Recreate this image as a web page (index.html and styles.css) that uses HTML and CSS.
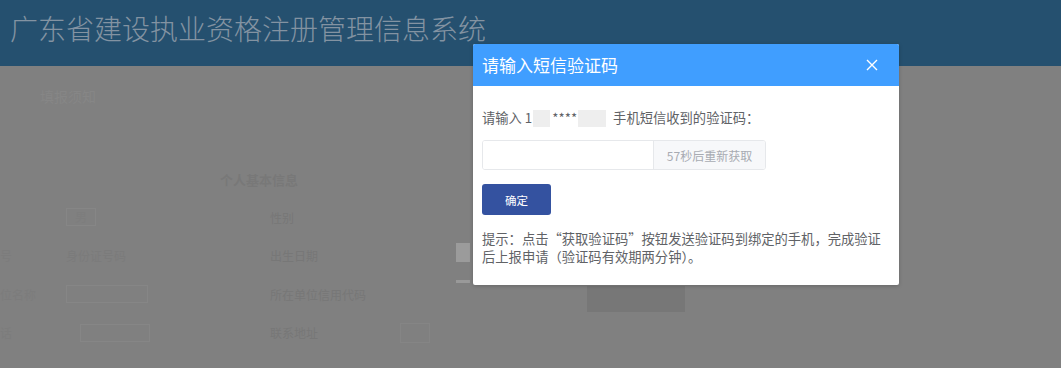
FILE: index.html
```html
<!DOCTYPE html>
<html lang="zh-CN">
<head>
<meta charset="utf-8">
<title>广东省建设执业资格注册管理信息系统</title>
<link rel="stylesheet" href="styles.css">
</head>
<body>
<div class="page">
  <header class="topbar">
    <h1 class="site-title">广东省建设执业资格注册管理信息系统</h1>
  </header>
  <main class="content">
    <div class="notice">填报须知</div>
    <div class="form">
      <div class="form-title">个人基本信息</div>
      <div class="row">
        <span class="cell c1"></span><span class="cell c2 box">男</span><span class="cell c3">性别</span><span class="cell c4"></span>
      </div>
      <div class="row">
        <span class="cell c1">号</span><span class="cell c2">身份证号码</span><span class="cell c3">出生日期</span><span class="cell c4"><span class="light-block"></span></span>
      </div>
      <div class="row">
        <span class="cell c1">位名称</span><span class="cell c2 box wide"></span><span class="cell c3">所在单位信用代码</span><span class="cell c4"><span class="light-line"></span><span class="dark-block"></span></span>
      </div>
      <div class="row">
        <span class="cell c1">话</span><span class="cell c2 box wide2"></span><span class="cell c3"><span>联系地址</span><span class="small-box"></span></span><span class="cell c4"></span>
      </div>
    </div>
  </main>
</div>

<div class="dialog">
  <div class="dialog-head">
    <span class="dialog-title">请输入短信验证码</span>
    <svg class="close" width="12" height="12" viewBox="0 0 12 12"><path d="M1 1 L11 11 M11 1 L1 11" stroke="#fff" stroke-width="1.4" fill="none"/></svg>
  </div>
  <div class="dialog-body">
    <p class="prompt">请输入 1<span class="mask m1"></span>****<span class="mask m2"></span>手机短信收到的验证码：</p>
    <div class="code-group">
      <input class="code-input" type="text">
      <span class="code-btn">57秒后重新获取</span>
    </div>
    <button class="ok-btn">确定</button>
    <p class="hint">提示：点击“获取验证码”按钮发送验证码到绑定的手机，完成验证后上报申请（验证码有效期两分钟）。</p>
  </div>
</div>
</body>
</html>
```
FILE: styles.css
```css
* { box-sizing: border-box; }
html, body {
  margin: 0;
  padding: 0;
  width: 1061px;
  height: 368px;
  overflow: hidden;
  background: #808080;
  font-family: "Noto Sans CJK SC", "Noto Sans", sans-serif;
}
.page { position: relative; }
.topbar {
  height: 66px;
  background: #25506f;
  padding: 8px 0 0 10px;
}
.site-title {
  margin: 0;
  font-weight: 300;
  font-size: 28px;
  line-height: 40px;
  color: #8393a2;
  letter-spacing: 0;
}
.content {
  padding: 20px 0 0 0;
}
.notice {
  margin-left: 40px;
  font-size: 14px;
  color: #868686;
  line-height: 20px;
}
.form { margin-top: 66px; }
.form-title {
  margin-left: 220px;
  font-size: 13px;
  font-weight: bold;
  color: #787878;
  line-height: 16px;
}
.row {
  display: flex;
  align-items: center;
  height: 38.5px;
  font-size: 12px;
  color: #7b7b7b;
}
.form-title + .row { margin-top: 10px; }
.cell { display: block; }
.c1 { width: 66px; color: #7c7c7c; text-align: left; overflow: hidden; white-space: nowrap; }
.c2 { width: 204px; }
.c2.box { flex: none; width: 30px; height: 18px; margin-right: 174px; border: 1px solid #868686; color: #7d7d7d; text-align: center; line-height: 16px; }
.c2.box.wide { width: 82px; margin-right: 122px; }
.c2.box.wide2 { width: 70px; margin-left: 14px; margin-right: 120px; }
.c3 { width: 186px; color: #777777; display: flex; align-items: center; justify-content: space-between; padding-right: 26px; }
.c4 { display: flex; align-items: center; }
.light-block { display: block; width: 14px; height: 19px; background: #9b9b9b; margin-bottom: 7px; }
.light-line { display: block; width: 14px; height: 3px; background: #999; margin-bottom: 26px; }
.small-box { display: block; width: 30px; height: 20px; border: 1px solid #858585; }
.dark-block { display: block; width: 98px; height: 26px; background: #777777; margin-left: 117px; margin-top: 10px; }

.dialog {
  position: absolute;
  left: 473px;
  top: 44px;
  width: 426px;
  background: #fff;
  border-radius: 2px;
  box-shadow: 0 1px 4px rgba(0,0,0,0.2);
  overflow: hidden;
}
.dialog-head {
  height: 42px;
  background: #409eff;
  display: flex;
  align-items: center;
  justify-content: space-between;
  padding: 0 21px 0 9px;
}
.dialog-title {
  color: #fff;
  font-size: 17px;
  line-height: 22px;
}
.close { display: block; }
.dialog-body {
  padding: 23px 9px 19px 9px;
  color: #606266;
}
.prompt {
  margin: 0;
  font-size: 13.3px;
  line-height: 18px;
  display: flex;
  align-items: center;
  white-space: nowrap;
}
.mask { display: inline-block; height: 17px; background: #eeeeee; }
.m1 { width: 17px; margin: 0 2px 0 1px; }
.m2 { width: 28px; margin: 0 7px 0 1px; }
.code-group {
  margin-top: 13px;
  display: flex;
  width: 284px;
  height: 30px;
  border: 1px solid #e6e8eb;
  border-radius: 3px;
  overflow: hidden;
}
.code-input {
  flex: none;
  width: 170px;
  height: 100%;
  border: 0;
  padding: 0 8px;
  margin: 0;
  outline: none;
  background: #fff;
}
.code-btn {
  flex: 1;
  border-left: 1px solid #e6e8eb;
  background: #f7f8fa;
  color: #a8abb2;
  font-size: 12px;
  display: flex;
  align-items: center;
  justify-content: center;
}
.ok-btn {
  display: block;
  margin-top: 14px;
  width: 69px;
  height: 31px;
  border: 0;
  border-radius: 3px;
  background: #3452a0;
  color: #fff;
  font-family: "Noto Sans CJK SC", sans-serif;
  font-size: 11.5px;
  padding: 0;
}
.hint {
  margin: 15px 0 0 0;
  font-size: 13.3px;
  line-height: 18px;
  color: #606266;
}
```
